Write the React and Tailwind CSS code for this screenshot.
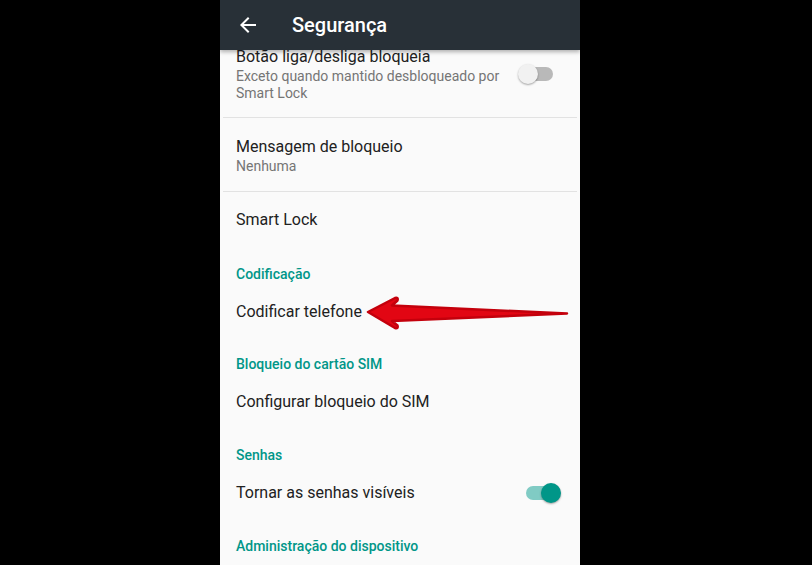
import React from "react";

function Toggle({ on }) {
  return (
    <div className="relative w-[36px] h-[20px] flex items-center">
      <div
        className={
          on
            ? "absolute left-[1px] right-[1px] h-[14px] rounded-full bg-[#80cbc4]"
            : "absolute left-[1px] right-[1px] h-[14px] rounded-full bg-[#b9b9b9]"
        }
      />
      <div
        className={
          on
            ? "absolute right-0 w-[20px] h-[20px] rounded-full bg-[#009688] shadow-[0_1px_2px_rgba(0,0,0,0.35)]"
            : "absolute left-0 w-[20px] h-[20px] rounded-full bg-[#f1f1f1] shadow-[0_1px_2px_rgba(0,0,0,0.35)]"
        }
      />
    </div>
  );
}

export default function App() {
  const font = { fontFamily: "Roboto, 'Noto Sans', Arial, sans-serif" };
  return (
    <div className="relative w-[812px] h-[565px] bg-black overflow-hidden" style={font}>
      <div className="ml-[220px] w-[360px] h-[565px] bg-[#fafafa] flex flex-col overflow-hidden">
        {/* Header */}
        <div className="relative z-10 h-[50px] shrink-0 bg-[#283037] flex items-center shadow-[0_2px_4px_rgba(0,0,0,0.3)]">
          <svg width="24" height="24" viewBox="0 0 24 24" className="ml-[16px]" fill="#ffffff">
            <path d="M20 11H7.83l5.59-5.59L12 4l-8 8 8 8 1.41-1.41L7.83 13H20v-2z" />
          </svg>
          <span className="ml-[32px] text-[20px] font-medium text-white leading-[24px]">Segurança</span>
        </div>

        {/* Content */}
        <div className="flex-1 overflow-hidden">
          <div className="-mt-[3px] text-[#212121]">
            {/* Item 1 */}
            <div className="flex items-start justify-between pl-[16px] pr-[26px] pb-[15px]">
              <div>
                <div className="text-[16px] leading-[20px]">Botão liga/desliga bloqueia</div>
                <div className="mt-[1px] text-[14px] leading-[17px] text-[#757575] w-[275px]">
                  Exceto quando mantido desbloqueado por Smart Lock
                </div>
              </div>
              <div className="mt-[17px]">
                <Toggle on={false} />
              </div>
            </div>
            <div className="mx-[3px] h-[1px] bg-[#e2e2e2]" />

            {/* Item 2 */}
            <div className="pl-[16px] pt-[19px] pb-[16px]">
              <div className="text-[16px] leading-[20px]">Mensagem de bloqueio</div>
              <div className="mt-[1px] text-[14px] leading-[17px] text-[#757575]">Nenhuma</div>
            </div>
            <div className="mx-[3px] h-[1px] bg-[#e2e2e2]" />

            {/* Smart Lock */}
            <div className="pl-[16px] pt-[18px] text-[16px] leading-[20px]">Smart Lock</div>

            <div className="pl-[16px] mt-[34px] text-[14px] leading-[20px] font-medium text-[#009688]">
              Codificação
            </div>
            <div className="pl-[16px] mt-[18px] text-[16px] leading-[20px]">Codificar telefone</div>

            <div className="pl-[16px] mt-[32px] text-[14px] leading-[20px] font-medium text-[#009688]">
              Bloqueio do cartão SIM
            </div>
            <div className="pl-[16px] mt-[18px] text-[16px] leading-[20px]">Configurar bloqueio do SIM</div>

            <div className="pl-[16px] mt-[33px] text-[14px] leading-[20px] font-medium text-[#009688]">
              Senhas
            </div>
            <div className="flex items-center justify-between pl-[16px] pr-[19px] mt-[18px]">
              <span className="text-[16px] leading-[20px]">Tornar as senhas visíveis</span>
              <Toggle on={true} />
            </div>

            <div className="pl-[16px] mt-[33px] text-[14px] leading-[20px] font-medium text-[#009688]">
              Administração do dispositivo
            </div>
          </div>
        </div>
      </div>

      {/* Red annotation arrow */}
      <svg
        className="absolute left-0 top-0 pointer-events-none"
        width="812"
        height="565"
        viewBox="0 0 812 565"
      >
        <path
          d="M368 312 L395 298 Q398.5 297 397.5 300.5 L392 305.5 L567 313.5 L392 321 L397.5 325.5 Q398.5 329 395 328 Z"
          fill="#e20613"
          stroke="#c4000c"
          strokeWidth="2.5"
          strokeLinejoin="round"
        />
      </svg>
    </div>
  );
}
